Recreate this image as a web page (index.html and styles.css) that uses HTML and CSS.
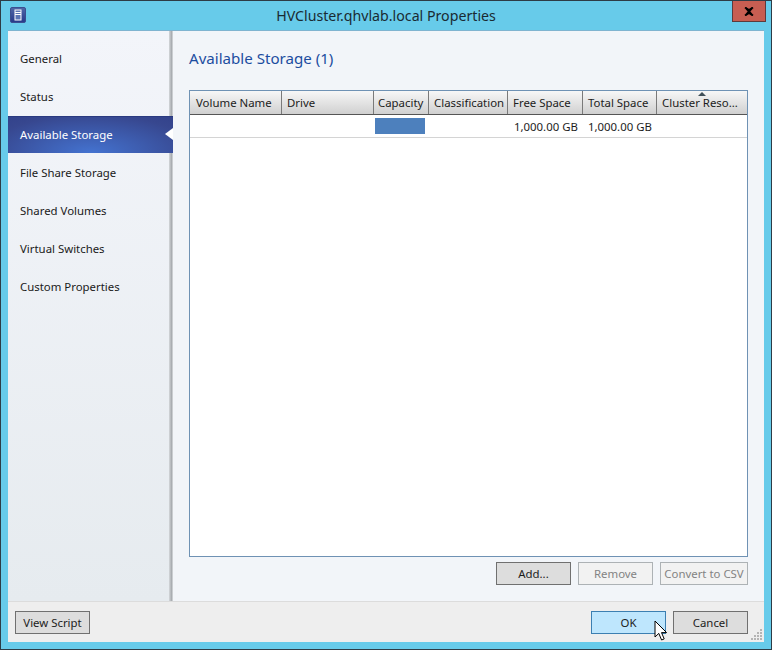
FILE: index.html
```html
<!DOCTYPE html>
<html lang="en">
<head>
<meta charset="utf-8">
<title>HVCluster.qhvlab.local Properties</title>
<link rel="stylesheet" href="styles.css">
</head>
<body>
<div class="window">
  <header class="titlebar">
    <div class="app-icon"><svg width="16" height="16" viewBox="0 0 16 16"><defs><linearGradient id="ig" x1="0" y1="0" x2="0" y2="1"><stop offset="0" stop-color="#5068a8"/><stop offset="1" stop-color="#26398a"/></linearGradient></defs><rect x="0.5" y="0.5" width="15" height="15" rx="1.5" fill="url(#ig)" stroke="#3b4f90"/><rect x="5" y="3" width="6" height="10" fill="#5a74b4" stroke="#fff"/><path d="M5 5.5h6M5 7.5h6" stroke="#fff"/></svg></div>
    <div class="title">HVCluster.qhvlab.local Properties</div>
    <div class="close"><svg width="10" height="9" viewBox="0 0 10 9"><path d="M1 .5 L5 3 L9 .5 M1 8.5 L5 6 L9 8.5 M2 1 L8 8 M8 1 L2 8" stroke="#000" stroke-width="2" fill="none"/></svg></div>
  </header>
  <div class="client">
    <div class="main">
      <nav class="sidebar">
        <div class="nav-item">General</div>
        <div class="nav-item">Status</div>
        <div class="nav-item active">Available Storage</div>
        <div class="nav-item">File Share Storage</div>
        <div class="nav-item">Shared Volumes</div>
        <div class="nav-item">Virtual Switches</div>
        <div class="nav-item">Custom Properties</div>
      </nav>
      <div class="splitter"></div>
      <section class="content">
        <h1 class="heading">Available Storage (1)</h1>
        <div class="table">
          <div class="row head">
            <div class="col c1">Volume Name</div>
            <div class="col c2">Drive</div>
            <div class="col c3">Capacity</div>
            <div class="col c4">Classification</div>
            <div class="col c5">Free Space</div>
            <div class="col c6">Total Space</div>
            <div class="col c7 sorted">Cluster Reso...</div>
          </div>
          <div class="row body">
            <div class="col c1"></div>
            <div class="col c2"></div>
            <div class="col c3"><div class="bar"></div></div>
            <div class="col c4"></div>
            <div class="col c5 value">1,000.00 GB</div>
            <div class="col c6">1,000.00 GB</div>
            <div class="col c7"></div>
          </div>
        </div>
        <div class="actions">
          <button class="btn">Add...</button>
          <button class="btn disabled">Remove</button>
          <button class="btn disabled wide">Convert to CSV</button>
        </div>
      </section>
    </div>
    <footer class="footer">
      <button class="btn">View Script</button>
      <div class="spacer"></div>
      <button class="btn primary">OK</button>
      <button class="btn">Cancel</button>
    </footer>
    <svg class="grip" width="12" height="12" viewBox="0 0 12 12"><path d="M9 0h2v2H9zM6 3h2v2H6zM9 3h2v2H9zM3 6h2v2H3zM6 6h2v2H6zM9 6h2v2H9zM0 9h2v2H0zM3 9h2v2H3zM6 9h2v2H6zM9 9h2v2H9z" fill="#b4b4b4"/></svg>
    <svg class="cursor" width="14" height="22" viewBox="0 0 14 22"><path d="M1 1 V17 L4.8 13.4 L7.6 20 L10.2 18.9 L7.5 12.6 H12.6 Z" fill="#fff" stroke="#000" stroke-width="1"/></svg>
  </div>
</div>
</body>
</html>
```
FILE: styles.css
```css
* { box-sizing: border-box; }
html, body { margin: 0; padding: 0; }
body { width: 772px; height: 650px; overflow: hidden; font-family: "Noto Sans", "Open Sans", sans-serif; font-size: 11.4px; color: #1c1c1c; }
.window { width: 772px; height: 650px; background: #67cbea; border: 1px solid #2d3c46; padding: 0 7px 7px; display: flex; flex-direction: column; }
.titlebar { height: 30px; display: grid; grid-template-columns: 1fr auto 1fr; align-items: start; flex: none; }
.app-icon { padding-top: 6px; padding-left: 2px; height: 30px; }
.app-icon svg { display: block; }
.title { font-size: 14.2px; line-height: 30px; color: #1a2a32; }
.close { justify-self: end; width: 34px; height: 21px; margin-right: -2px; background: #c75e52; border: 1px solid #5e3a3c; border-top: 0; display: flex; align-items: center; justify-content: center; }
.client { flex: 1; min-height: 0; position: relative; display: flex; flex-direction: column; background: #eeeeee; box-shadow: 0 -1px 0 #7fb4d0; }
.main { flex: 1; min-height: 0; display: flex; background: #f2f5f9; }
.sidebar { width: 161px; flex: none; padding-top: 8px; background: linear-gradient(to bottom, #f3f5fa 0%, #e6ebef 100%); }
.nav-item { height: 38px; line-height: 40px; padding-left: 12px; color: #1a1a1a; position: relative; white-space: nowrap; }
.nav-item.active { width: 165px; height: 37px; margin-top: 1px; line-height: 38px; color: #fff; background: radial-gradient(ellipse 90% 55px at 50% 100%, #4473d0 0%, #37478f 70%, #2f3e88 100%); box-shadow: inset 0 1px 0 #2a3a80; }
.nav-item.active::after { content: ""; position: absolute; right: 0; top: 12px; border: 6px solid transparent; border-left: 0; border-right: 8px solid #fff; }
.splitter { width: 4px; flex: none; background: linear-gradient(to right, #d4d7da, #a8acb0 65%, #dde0e3); }
.content { flex: 1; min-width: 0; padding: 15px 16px 15px 16px; display: flex; flex-direction: column; }
.heading { margin: 0; height: 44px; font-size: 15.1px; line-height: 24px; font-weight: 400; color: #1c4da0; }
.table { flex: 1; min-height: 0; background: #fff; border: 1px solid #6f92b4; }
.row { display: flex; }
.col { flex: none; padding-left: 5px; white-space: nowrap; overflow: hidden; }
.head { height: 24px; line-height: 24px; background: linear-gradient(to bottom, #f7f7f7, #d0d0d0); border-bottom: 1px solid #555; }
.head .col { height: 23px; border-right: 1px solid #7a7a7a; }
.head .col:last-child { border-right: 0; }
.body { height: 23px; line-height: 23px; border-bottom: 1px solid #d4d4d4; }
.c1 { width: 92px; padding-left: 6px; }
.c2 { width: 92px; }
.c3 { width: 55px; padding-left: 4px; }
.c4 { width: 79px; }
.c5 { width: 75px; }
.c5.value { padding-left: 6px; }
.c6 { width: 74px; }
.c7 { flex: 1; }
.body .c3 { padding: 3px 0 0 1px; }
.bar { width: 50px; height: 16px; background: #4d80bd; }
.sorted { position: relative; }
.sorted::before { content: ""; position: absolute; left: 41px; top: 1px; border: 4px solid transparent; border-top: 0; border-bottom: 4px solid #3f4f58; }
.actions { display: flex; justify-content: flex-end; gap: 7px; padding-top: 5px; flex: none; height: 29px; }
.btn { width: 75px; height: 23px; padding: 0; background: #dddddd; border: 1px solid #707070; font: inherit; color: #1c1c1c; }
.btn.disabled { background: #f2f2f2; border-color: #adb2b5; color: #838383; }
.btn.wide { width: 88px; }
.btn.primary { background: #bee6fd; border-color: #3c7fb1; }
.footer { height: 41px; flex: none; display: flex; align-items: flex-start; gap: 7px; padding: 9px 16px 0 7px; background: #eeeeee; border-top: 1px solid #dcdcdc; }
.spacer { flex: 1; }
.grip { position: absolute; right: 1px; bottom: 1px; }
.cursor { position: absolute; left: 646px; top: 589px; }
```
